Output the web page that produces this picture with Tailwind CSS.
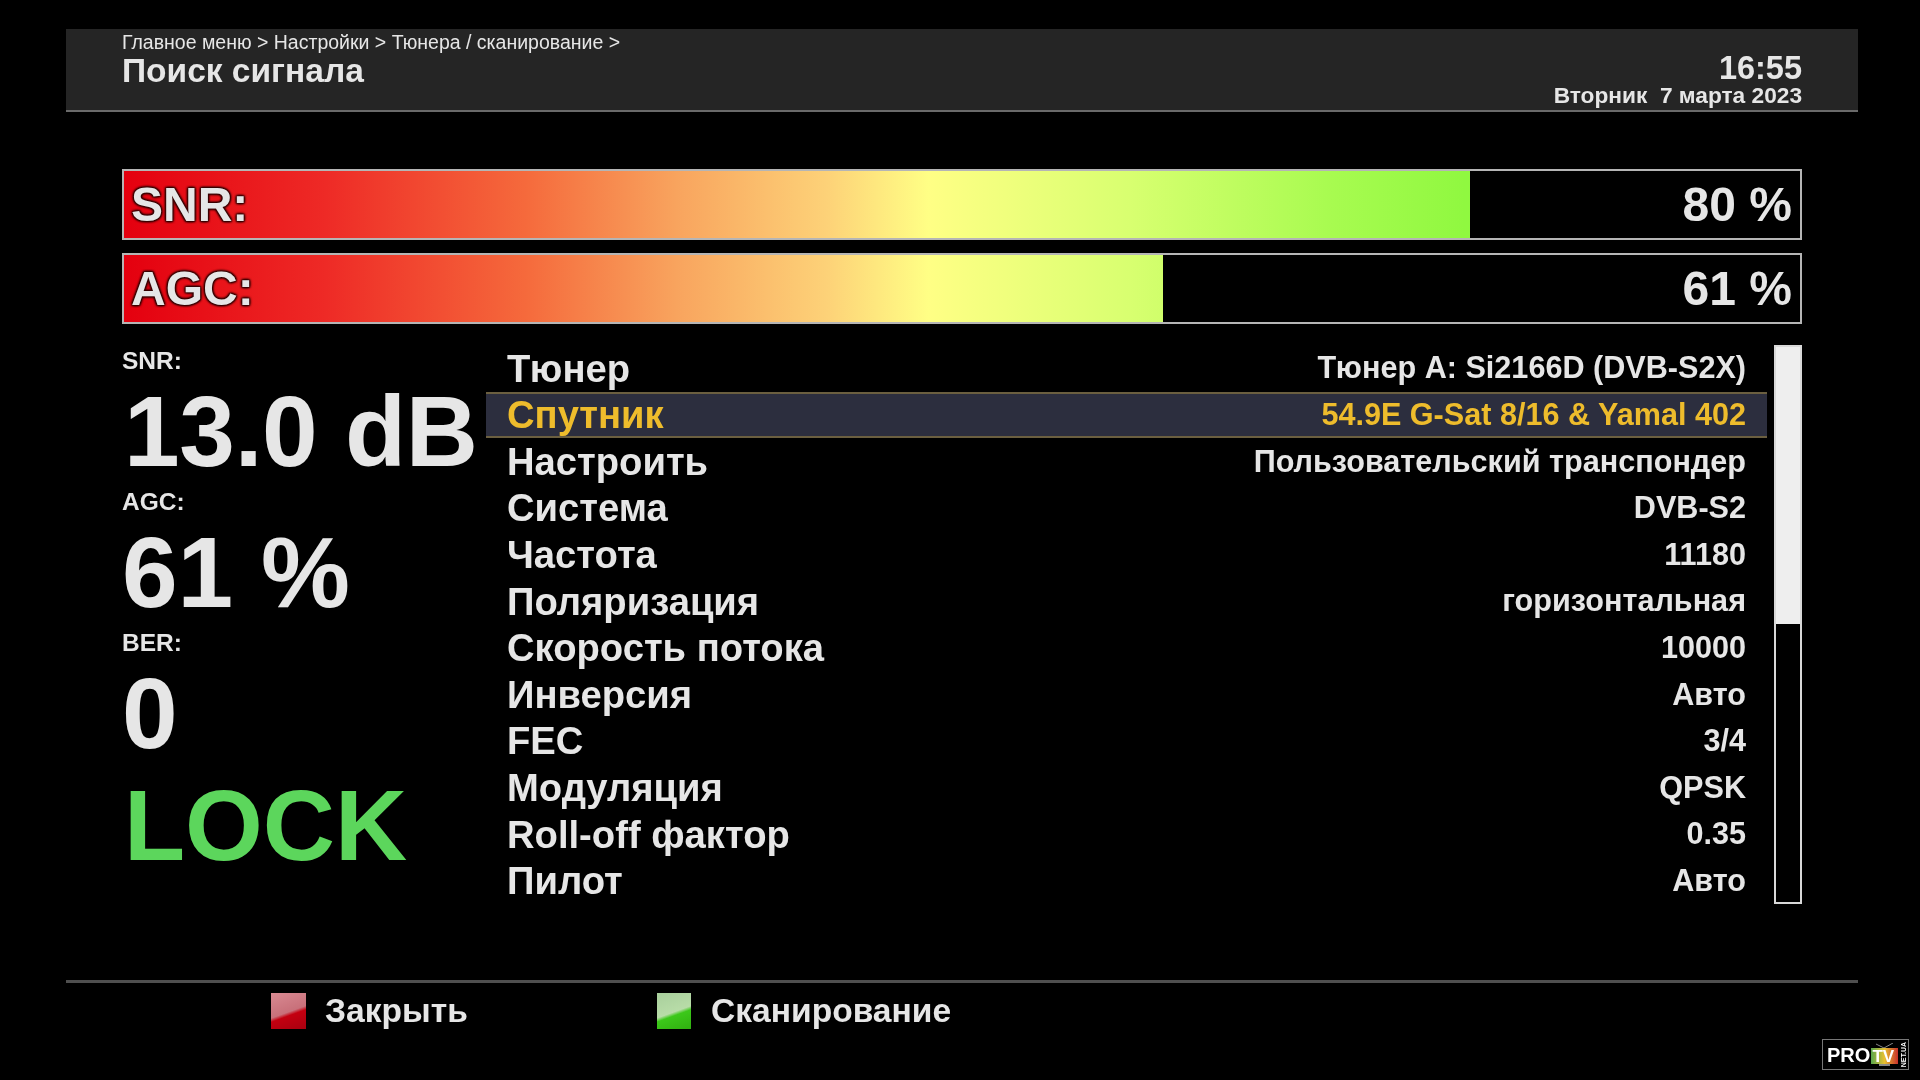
<!DOCTYPE html>
<html lang="ru">
<head>
    <meta charset="UTF-8" />
    <title>Поиск сигнала</title>
    <script src="https://cdn.jsdelivr.net/npm/@tailwindcss/browser@4"></script>
</head>
<body class="bg-black">
    <div class="relative w-[1920px] h-[1080px] overflow-hidden bg-black pt-[29px] font-['Liberation_Sans',sans-serif] text-[#e6e6e6] blur-[0.6px]">
        <!-- header -->
        <header class="ml-[66px] w-[1792px] h-[83px] flex justify-between bg-[#252525] border-b-2 border-[#6a6a6a] px-[56px]">
            <div>
                <div class="text-[19.5px] leading-[26px]">Главное меню &gt; Настройки &gt; Тюнера / сканирование &gt;</div>
                <div class="text-[33.5px] leading-[34px] mt-[-1px] font-bold">Поиск сигнала</div>
            </div>
            <div class="text-right font-bold pt-[24px]">
                <div class="text-[32.5px] leading-[31px]">16:55</div>
                <div class="text-[22.7px] leading-[22px]">Вторник&nbsp; 7 марта 2023</div>
            </div>
        </header>

        <!-- bars -->
        <div class="mt-[57px] mr-[118px] ml-[122px] flex flex-col gap-[13px]">
            <div class="relative h-[71px] border-2 border-[#b5b5b5]">
                <div class="absolute inset-y-0 left-0 w-[80.3%] bg-[length:1676px_100%] bg-[linear-gradient(90deg,#e4000f_0%,#ee2a26_12%,#f56a3c_24%,#f8a45e_33%,#fdd278_42%,#ffff85_48%,#d8ff70_60%,#a8fb50_72%,#90f840_80%)]"></div>
                <div class="relative h-full flex items-center justify-between pl-[7px] pr-[8px] text-[48px] font-bold">
                    <span class="[text-shadow:0_0_3px_#300,1px_1px_2px_#300,-1px_-1px_2px_#300,1px_-1px_2px_#300,-1px_1px_2px_#300]">SNR:</span>
                    <span>80 %</span>
                </div>
            </div>
            <div class="relative h-[71px] border-2 border-[#b5b5b5]">
                <div class="absolute inset-y-0 left-0 w-[62%] bg-[length:1676px_100%] bg-[linear-gradient(90deg,#e4000f_0%,#ee2a26_12%,#f56a3c_24%,#f8a45e_33%,#fdd278_42%,#ffff85_48%,#d8ff70_60%,#a8fb50_72%,#90f840_80%)]"></div>
                <div class="relative h-full flex items-center justify-between pl-[7px] pr-[8px] text-[48px] font-bold">
                    <span class="[text-shadow:0_0_3px_#300,1px_1px_2px_#300,-1px_-1px_2px_#300,1px_-1px_2px_#300,-1px_1px_2px_#300]">AGC:</span>
                    <span>61 %</span>
                </div>
            </div>
        </div>

        <!-- main -->
        <div class="mt-[21px] ml-[122px] flex">
            <div class="w-[364px] font-bold pt-[1px]">
                <div class="h-[141px]">
                    <div class="text-[24.5px] leading-[30px]">SNR:</div>
                    <div class="text-[100px] leading-[111px] pl-[2px] tracking-[-0.3px] whitespace-nowrap">13.0 dB</div>
                </div>
                <div class="h-[141px]">
                    <div class="text-[24.5px] leading-[30px]">AGC:</div>
                    <div class="text-[100px] leading-[111px]">61 %</div>
                </div>
                <div class="h-[141px]">
                    <div class="text-[24.5px] leading-[30px]">BER:</div>
                    <div class="text-[100px] leading-[111px]">0</div>
                </div>
                <div class="text-[100px] leading-[111px] text-[#5cd65c] pl-[2px] pt-[1px]">LOCK</div>
            </div>

            <div class="w-[1281px] font-bold">
                <div class="h-[46.6px] flex items-center justify-between px-[21px]"><span class="text-[38.2px]">Тюнер</span><span class="text-[30.6px]">Тюнер A: Si2166D (DVB-S2X)</span></div>
                <div class="h-[46.6px] flex items-center justify-between px-[21px] text-[#eebc2c] bg-[#2c2e3e] border-y-2 border-[#6b5f40]"><span class="text-[38.2px]">Спутник</span><span class="text-[30.6px]">54.9E G-Sat 8/16 &amp; Yamal 402</span></div>
                <div class="h-[46.6px] flex items-center justify-between px-[21px]"><span class="text-[38.2px]">Настроить</span><span class="text-[30.6px]">Пользовательский транспондер</span></div>
                <div class="h-[46.6px] flex items-center justify-between px-[21px]"><span class="text-[38.2px]">Система</span><span class="text-[30.6px]">DVB-S2</span></div>
                <div class="h-[46.6px] flex items-center justify-between px-[21px]"><span class="text-[38.2px]">Частота</span><span class="text-[30.6px]">11180</span></div>
                <div class="h-[46.6px] flex items-center justify-between px-[21px]"><span class="text-[38.2px]">Поляризация</span><span class="text-[30.6px]">горизонтальная</span></div>
                <div class="h-[46.6px] flex items-center justify-between px-[21px]"><span class="text-[38.2px]">Скорость потока</span><span class="text-[30.6px]">10000</span></div>
                <div class="h-[46.6px] flex items-center justify-between px-[21px]"><span class="text-[38.2px]">Инверсия</span><span class="text-[30.6px]">Авто</span></div>
                <div class="h-[46.6px] flex items-center justify-between px-[21px]"><span class="text-[38.2px]">FEC</span><span class="text-[30.6px]">3/4</span></div>
                <div class="h-[46.6px] flex items-center justify-between px-[21px]"><span class="text-[38.2px]">Модуляция</span><span class="text-[30.6px]">QPSK</span></div>
                <div class="h-[46.6px] flex items-center justify-between px-[21px]"><span class="text-[38.2px]">Roll-off фактор</span><span class="text-[30.6px]">0.35</span></div>
                <div class="h-[46.6px] flex items-center justify-between px-[21px]"><span class="text-[38.2px]">Пилот</span><span class="text-[30.6px]">Авто</span></div>
            </div>

            <!-- scrollbar -->
            <div class="ml-[7px] w-[28px] h-[559px] border-2 border-[#d8d8d8]">
                <div class="h-[277px] bg-[#eeeeee]"></div>
            </div>
        </div>

        <!-- footer -->
        <footer class="absolute left-[66px] top-[980px] w-[1792px] border-t-[3px] border-[#4f4f4f] flex pt-[3px] text-[33.6px] font-bold">
            <div class="ml-[205px] w-[386px] flex items-center">
                <div class="w-[35px] h-[36px] bg-[linear-gradient(160deg,#d98a92_0%,#c8707a_52%,#c40010_60%,#a80010_100%)]"></div>
                <span class="ml-[19px]">Закрыть</span>
            </div>
            <div class="flex items-center">
                <div class="w-[34px] h-[36px] bg-[linear-gradient(160deg,#a8cf9c_0%,#b8dca8_52%,#3cc81a_60%,#30b010_100%)]"></div>
                <span class="ml-[20px]">Сканирование</span>
            </div>
        </footer>

        <!-- watermark -->
        <div class="absolute left-[1822px] top-[1039px] w-[87px] h-[31px] border border-[#777] bg-black flex items-center pl-[4px] font-bold text-white">
            <span class="text-[20px] leading-none">PRO</span>
            <div class="relative w-[29px] h-[24px]">
                <svg class="absolute inset-0" width="29" height="24" viewBox="0 0 29 24">
                    <defs>
                        <linearGradient id="tvscreen" x1="0" y1="0" x2="1" y2="0">
                            <stop offset="0" stop-color="#5aa84f" />
                            <stop offset="0.5" stop-color="#e8c030" />
                            <stop offset="1" stop-color="#c8302b" />
                        </linearGradient>
                    </defs>
                    <path d="M6 1 L14 5 L23 0" fill="none" stroke="#888" stroke-width="1" />
                    <rect x="1" y="5" width="27" height="16" fill="url(#tvscreen)" />
                    <rect x="9" y="21" width="11" height="2" fill="#888" />
                </svg>
                <span class="absolute inset-x-0 top-[5px] text-center text-[17px] leading-none">TV</span>
            </div>
            <span class="ml-[2px] w-[11px] h-[27px] text-white text-[7px] flex items-center justify-center"><span class="[writing-mode:vertical-rl] rotate-180 leading-none">NET.UA</span></span>
        </div>
    </div>
</body>
</html>
